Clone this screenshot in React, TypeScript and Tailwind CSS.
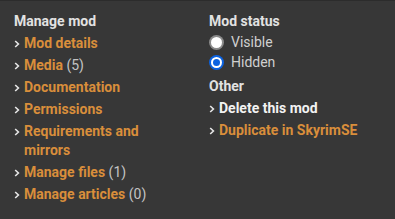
import React from "react";

function Chev({ className = "" }: { className?: string }) {
  return (
    <svg width="6" height="8" viewBox="0 0 6 8" className={"shrink-0 " + className}>
      <path d="M1.2 1 L4.4 4 L1.2 7" fill="none" stroke="#e6e6e6" strokeWidth="1.6" />
    </svg>
  );
}

function Item({ label, count, white }: { label: React.ReactNode; count?: number; white?: boolean }) {
  return (
    <div className="flex items-start">
      <div className="w-[10px] h-[19px] flex items-center">
        <Chev />
      </div>
      <div className="leading-[19px]">
        <span className={white ? "text-[#f2f2f2] font-bold" : "text-[#d98e3b] font-bold"}>{label}</span>
        {count !== undefined && <span className="text-[#c4c4c4] font-normal"> ({count})</span>}
      </div>
    </div>
  );
}

function Radio({ checked, label }: { checked?: boolean; label: string }) {
  return (
    <div className="flex items-center gap-[7px] h-[20px]">
      {checked ? (
        <div className="w-[15px] h-[15px] rounded-full bg-[#0b62e0] flex items-center justify-center">
          <div className="w-[11px] h-[11px] rounded-full bg-white flex items-center justify-center">
            <div className="w-[7px] h-[7px] rounded-full bg-[#0b62e0]" />
          </div>
        </div>
      ) : (
        <div className="w-[15px] h-[15px] rounded-full bg-[#8a8a8a] flex items-center justify-center">
          <div className="w-[11px] h-[11px] rounded-full bg-white" />
        </div>
      )}
      <span className="text-[#d0d0d0] leading-[19px]">{label}</span>
    </div>
  );
}

export default function App() {
  return (
    <div
      className="w-[395px] h-[219px] bg-[#373737] border-t border-[#2c2c2c] text-[14px] flex pl-[14px] pt-[11px]"
      style={{ fontFamily: "Roboto, 'Liberation Sans', sans-serif" }}
    >
      <div className="w-[195px] flex flex-col gap-[3px]">
        <div className="text-[#e2e2e2] font-bold leading-[19px]">Manage mod</div>
        <Item label="Mod details" />
        <Item label="Media" count={5} />
        <Item label="Documentation" />
        <Item label="Permissions" />
        <Item label={<>Requirements and<br />mirrors</>} />
        <Item label="Manage files" count={1} />
        <Item label="Manage articles" count={0} />
      </div>
      <div className="flex flex-col">
        <div className="text-[#e2e2e2] font-bold leading-[19px] mb-[1px]">Mod status</div>
        <Radio label="Visible" />
        <Radio checked label="Hidden" />
        <div className="text-[#e2e2e2] font-bold leading-[19px] mt-[5px] mb-[3px]">Other</div>
        <div className="flex flex-col gap-[3px]">
          <Item label="Delete this mod" white />
          <Item label="Duplicate in SkyrimSE" />
        </div>
      </div>
    </div>
  );
}
